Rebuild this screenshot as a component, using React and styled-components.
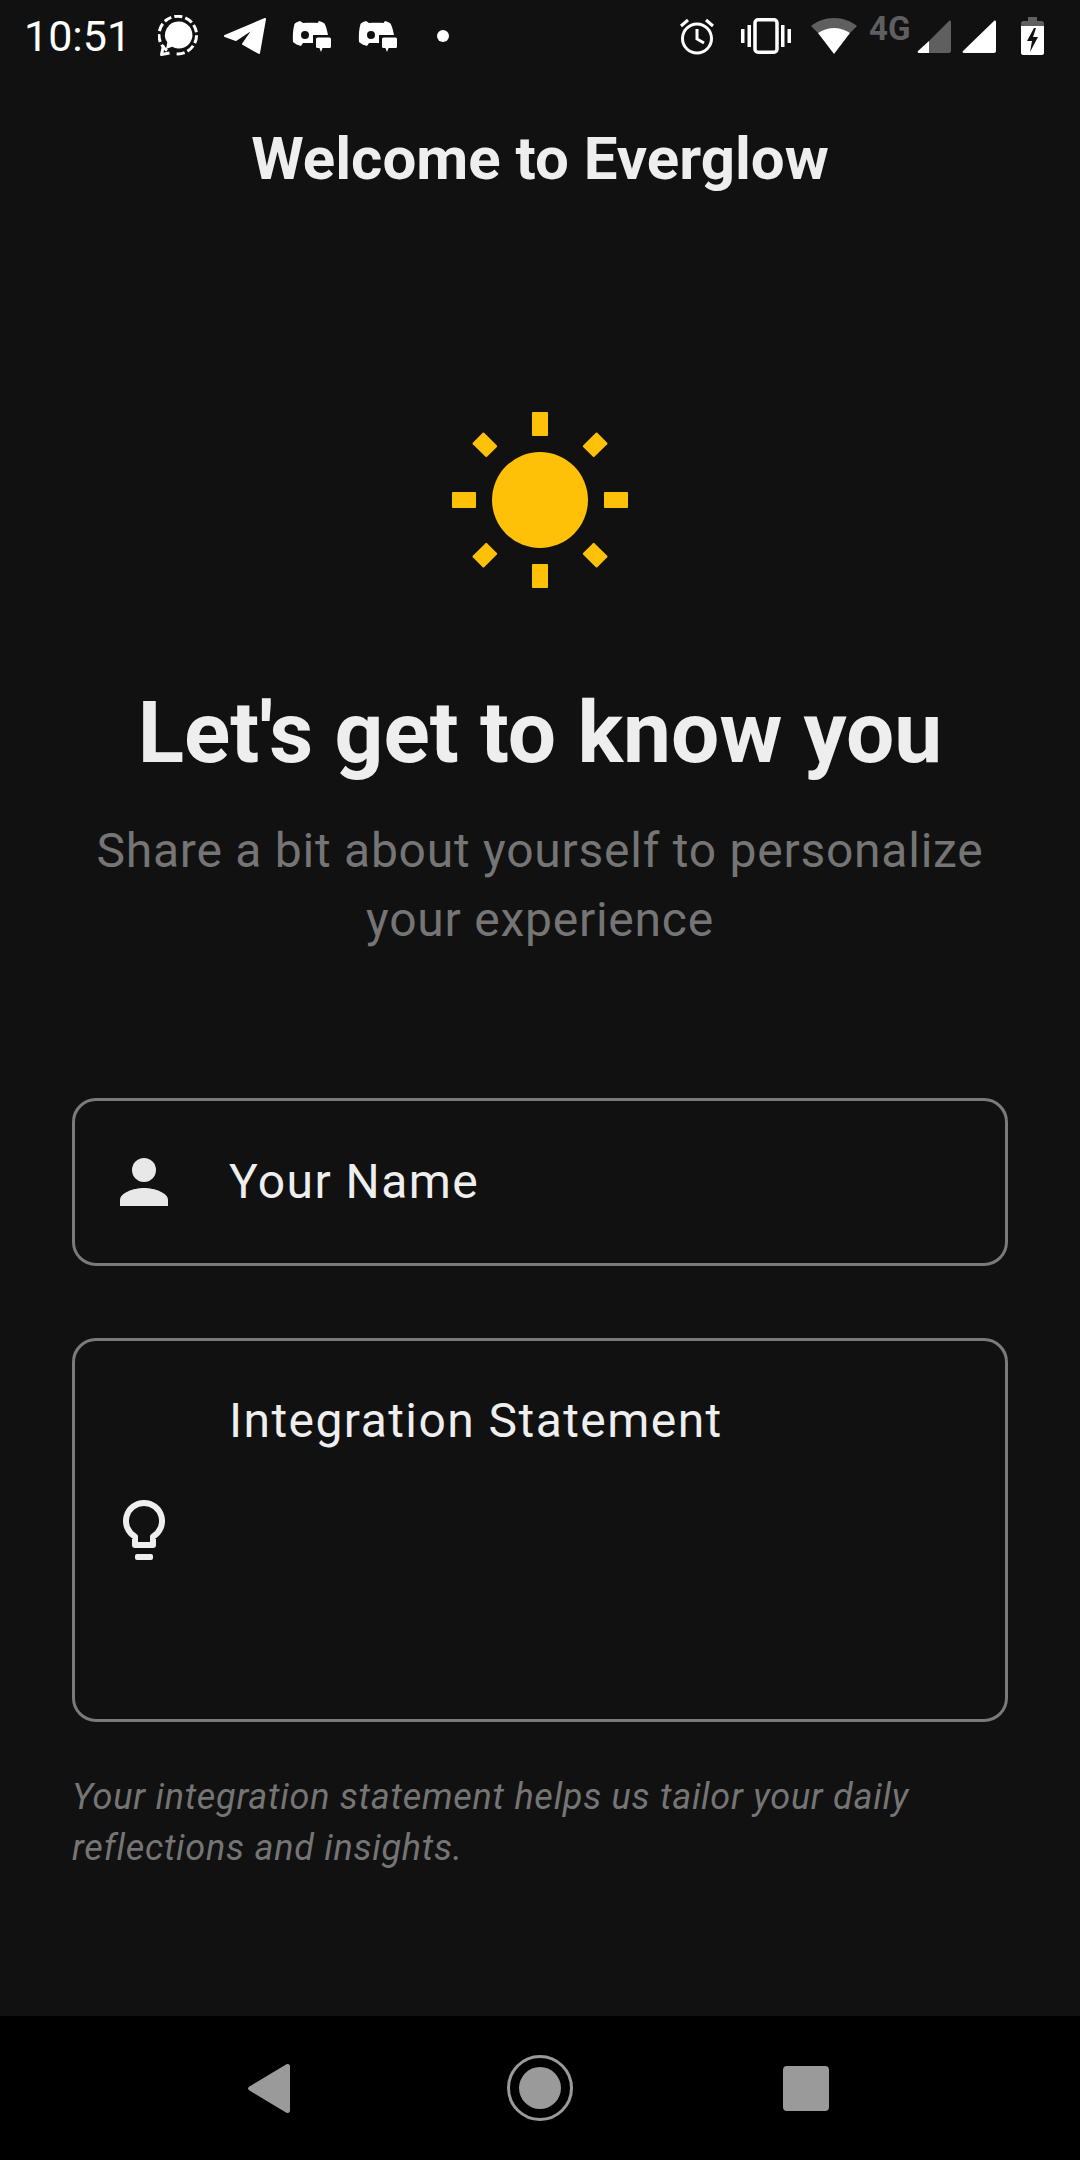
import React from 'react';
import styled, { createGlobalStyle } from 'styled-components';

const GlobalStyle = createGlobalStyle`
  html, body {
    margin: 0;
    padding: 0;
    background: #111111;
  }
  * {
    box-sizing: border-box;
  }
`;

const DiscordIcon = ({ ml }) => (
  <StatusIcon $ml={ml} width="40" height="33" viewBox="0 0 40 33">
    <path
      fill="#fff"
      d="M8 1C5 2 3 3 2.500 4 1 9 .5 15 1 22c2 2 5 3 8 4l2-3h10v-8h15c-1-5-2-9-3.500-11.500C31 2.500 29 1.500 27 1l-1.500 2c-4.500-.5-9.500-.5-14.500 0z"
    />
    <circle cx="13" cy="15" r="4" fill="#111111" />
    <rect x="24" y="17.500" width="15" height="10.500" rx="1.500" fill="#fff" />
    <path fill="#fff" d="M27 27h4l-2 5z" />
  </StatusIcon>
);

const PersonIcon = () => (
  <FieldIcon width="72" height="72" viewBox="0 0 72 72">
    <circle cx="36" cy="24" r="12" fill="#e8e8e8" />
    <path fill="#e8e8e8" d="M12 60v-6c0-7 13-12 24-12s24 5 24 12v6z" />
  </FieldIcon>
);

const BulbIcon = () => (
  <FieldIcon width="72" height="72" viewBox="0 0 72 72">
    <path
      fill="none"
      stroke="#eeeeee"
      strokeWidth="6"
      strokeLinejoin="round"
      d="M36 9a18 18 0 0 0-9 33.600V51h18v-8.400A18 18 0 0 0 36 9z"
    />
    <rect x="27" y="60" width="18" height="6" rx="2" fill="#eeeeee" />
  </FieldIcon>
);

const SunIcon = () => (
  <Sun width="176" height="176" viewBox="0 0 176 176">
    <circle cx="88" cy="88" r="48" fill="#ffc107" />
    {[0, 45, 90, 135, 180, 225, 270, 315].map((angle) => (
      <rect
        key={angle}
        x="80"
        y="0"
        width="16"
        height={angle % 90 === 0 ? 24 : 20}
        rx="1"
        fill="#ffc107"
        transform={`rotate(${angle} 88 88)`}
      />
    ))}
  </Sun>
);

const App = () => {
  return (
    <>
      <GlobalStyle />
      <Screen>
        <StatusBar>
          <StatusGroup>
            <Clock>10:51</Clock>
            <StatusIcon $ml={29} width="42" height="42" viewBox="0 0 42 42">
              <path
                fill="none"
                stroke="#fff"
                strokeWidth="3"
                strokeDasharray="8 3"
                d="M9 35.500A18.800 18.800 0 1 1 16 38.500"
              />
              <path fill="none" stroke="#fff" strokeWidth="3" strokeLinejoin="round" d="M5.500 30.500 3.500 39.500 11.500 38" />
              <path fill="#fff" d="M21 6.500a13.500 13.500 0 1 1-6.800 25.200L8 34l1.300-6.500A13.500 13.500 0 0 1 21 6.500z" />
            </StatusIcon>
            <StatusIcon $ml={24} width="42" height="36" viewBox="0 0 42 36">
              <path
                fill="#fff"
                stroke="#fff"
                strokeWidth="2"
                strokeLinejoin="round"
                d="M41 1 1 18l11 4L30 10 19 26l16 9z"
              />
            </StatusIcon>
            <DiscordIcon ml={26} />
            <DiscordIcon ml={26} />
            <Dot />
          </StatusGroup>
          <StatusGroup>
            <StatusIcon width="38" height="38" viewBox="0 0 38 38">
              <circle cx="19" cy="21.500" r="14.500" fill="none" stroke="#fff" strokeWidth="3" />
              <path fill="none" stroke="#fff" strokeWidth="3" d="M19 12v10l7 4M3 9l7-6M35 9l-7-6" />
            </StatusIcon>
            <StatusIcon $ml={25} width="50" height="36" viewBox="0 0 50 36">
              <rect x="14" y="1.750" width="22" height="32.500" rx="3" fill="none" stroke="#fff" strokeWidth="3.500" />
              <path fill="#fff" d="M6.500 7H10v22H6.500zM0 11h3.500v14H0zM40 7h3.500v22H40zM46.500 11H50v14h-3.500z" />
            </StatusIcon>
            <StatusIcon $ml={20} width="46" height="37" viewBox="0 0 46 37">
              <path fill="#5f5f5f" d="M23 0C14 0 6 3 0 8l7 7c4-3 10-5 16-5s12 2 16 5l7-7C40 3 32 0 23 0z" />
              <path fill="#fff" d="M7 15c4-3 10-5 16-5s12 2 16 5L23 36z" />
            </StatusIcon>
            <NetworkType>4G</NetworkType>
            <StatusIcon $ml={5} width="34" height="33" viewBox="0 0 34 33">
              <path fill="#5f5f5f" d="M12 21 32 1c1-1 2 0 2 1v29c0 1-1 2-2 2H12z" />
              <path fill="#fff" d="M12 21v12H2c-1 0-2-1-1-2z" />
            </StatusIcon>
            <StatusIcon $ml={11} width="34" height="33" viewBox="0 0 34 33">
              <path fill="#fff" d="M32 1c1-1 2 0 2 1v29c0 1-1 2-2 2H2c-1 0-2-1-1-2z" />
            </StatusIcon>
            <StatusIcon $ml={25} width="23" height="38" viewBox="0 0 23 38">
              <path fill="#5f5f5f" d="M7 0h9v4h5c1 0 2 1 2 2v3H0V6c0-1 1-2 2-2h5z" />
              <path
                fill="#fff"
                fillRule="evenodd"
                d="M0 9h23v27c0 1-1 2-2 2H2c-1 0-2-1-2-2zM13 11 6 24h5l-2 11 8-15h-5l3-9z"
              />
            </StatusIcon>
          </StatusGroup>
        </StatusBar>

        <AppBarTitle>Welcome to Everglow</AppBarTitle>

        <Content>
          <SunIcon />
          <Heading>Let's get to know you</Heading>
          <Subtitle>
            Share a bit about yourself to personalize
            <br />
            your experience
          </Subtitle>

          <Field $height={168}>
            <IconSlot>
              <PersonIcon />
            </IconSlot>
            <Placeholder>Your Name</Placeholder>
          </Field>

          <Field $height={384} $top={72} $multiline>
            <IconSlot>
              <BulbIcon />
            </IconSlot>
            <Placeholder>Integration Statement</Placeholder>
          </Field>

          <Hint>
            Your integration statement helps us tailor your daily
            <br />
            reflections and insights.
          </Hint>
        </Content>

        <NavBar>
          <NavIcon width="42" height="49" viewBox="0 0 42 49">
            <path fill="#9a9a9a" d="M38 .5c2-1.300 4 0 4 2v44c0 2-2 3.300-4 2L1.500 26.500c-2-1.200-2-2.800 0-4z" />
          </NavIcon>
          <NavIcon $ml={217} width="66" height="66" viewBox="0 0 66 66">
            <circle cx="33" cy="33" r="31.500" fill="none" stroke="#9a9a9a" strokeWidth="3" />
            <circle cx="33" cy="33" r="21" fill="#9a9a9a" />
          </NavIcon>
          <HomeSquare />
        </NavBar>
      </Screen>
    </>
  );
};

const Screen = styled.div`
  width: 1080px;
  height: 2160px;
  display: flex;
  flex-direction: column;
  background: #111111;
  font-family: Roboto, sans-serif;
  overflow: hidden;
`;

const StatusBar = styled.div`
  height: 72px;
  flex: none;
  display: flex;
  align-items: center;
  justify-content: space-between;
  padding: 0 36px 0 24px;
`;

const StatusGroup = styled.div`
  display: flex;
  align-items: center;
`;

const Clock = styled.span`
  width: 105px;
  font-size: 43px;
  color: #fff;
`;

const StatusIcon = styled.svg`
  flex: none;
  display: block;
  margin-left: ${(props) => props.$ml || 0}px;
`;

const Dot = styled.span`
  width: 12px;
  height: 12px;
  margin-left: 39px;
  border-radius: 50%;
  background: #fff;
`;

const NetworkType = styled.span`
  width: 43px;
  margin: -16px 0 0 12px;
  font-size: 33px;
  font-weight: 700;
  color: #5f5f5f;
`;

const AppBarTitle = styled.h1`
  margin: 55px 0 0;
  height: 64px;
  line-height: 64px;
  text-align: center;
  font-size: 60px;
  font-weight: 700;
  color: #eeeeee;
`;

const Content = styled.main`
  flex: 1;
  display: flex;
  flex-direction: column;
  align-items: center;
  padding: 0 72px;
`;

const Sun = styled.svg`
  display: block;
  margin-top: 221px;
`;

const Heading = styled.h2`
  margin: 101px 0 0;
  line-height: 88px;
  font-size: 85.6px;
  font-weight: 700;
  white-space: nowrap;
  color: #eeeeee;
`;

const Subtitle = styled.p`
  margin: 39px 0 0;
  font-size: 48px;
  line-height: 69px;
  letter-spacing: 0.75px;
  text-align: center;
  white-space: nowrap;
  color: #757575;
`;

const Field = styled.div`
  align-self: stretch;
  height: ${(props) => props.$height}px;
  margin-top: ${(props) => props.$top || 144}px;
  flex: none;
  display: flex;
  align-items: ${(props) => (props.$multiline ? 'flex-start' : 'center')};
  padding-left: 33px;
  border: 3px solid #7a7a7a;
  border-radius: 24px;
`;

const IconSlot = styled.div`
  align-self: center;
  flex: none;
  width: 72px;
  height: 72px;
`;

const FieldIcon = styled.svg`
  display: block;
`;

const Placeholder = styled.span`
  margin-left: 49px;
  font-size: 48px;
  line-height: 160px;
  letter-spacing: 1.44px;
  color: #eeeeee;
`;

const Hint = styled.p`
  align-self: stretch;
  margin: 50px 0 0;
  font-size: 36px;
  font-style: italic;
  line-height: 51px;
  letter-spacing: 0.75px;
  color: #757575;
`;

const NavBar = styled.nav`
  height: 144px;
  flex: none;
  display: flex;
  align-items: center;
  padding-left: 248px;
  background: #000;
`;

const NavIcon = styled.svg`
  display: block;
  margin-left: ${(props) => props.$ml || 0}px;
`;

const HomeSquare = styled.span`
  width: 46px;
  height: 45px;
  margin-left: 210px;
  border-radius: 4px;
  background: #9a9a9a;
`;

export default App;
